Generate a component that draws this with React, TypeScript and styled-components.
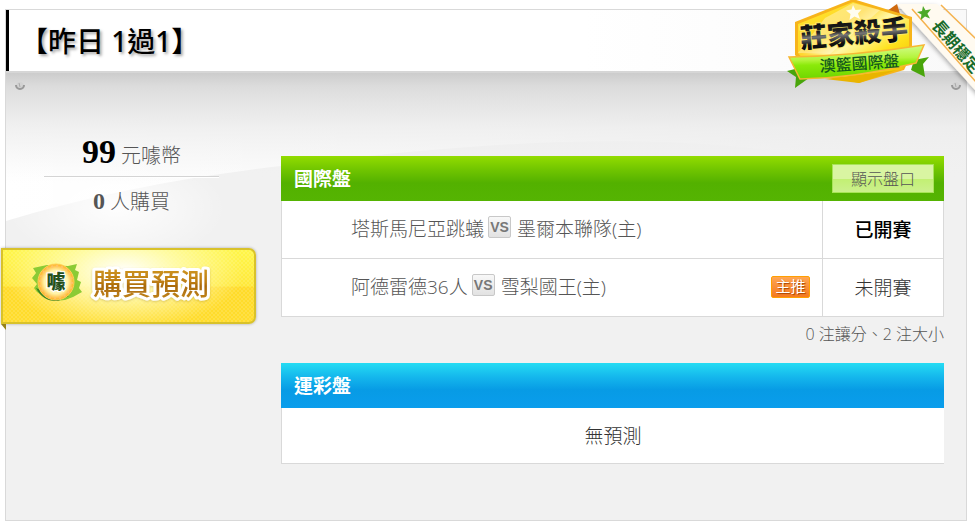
import React from 'react';
import styled, { createGlobalStyle, css } from 'styled-components';

const GlobalStyle = createGlobalStyle`
  * { box-sizing: border-box; }
  body {
    margin: 0;
    background: #fff;
    color: #555;
    font-family: "Open Sans", "Noto Sans CJK TC", sans-serif;
    font-size: 19px;
    font-weight: 300;
    overflow-x: hidden;
  }
`;

const Card = styled.section`
  position: relative;
  margin: 9px 8px 9px 5px;
  border: 1px solid #d9d9d9;
  background: #f1f1f1;
`;

const CardHeader = styled.header`
  display: flex;
  align-items: center;
  height: 61px;
  padding-left: 11px;
  border-left: 3px solid #000;
  background: linear-gradient(to right, #fff 60%, #f9f9f9);
`;

const Title = styled.h1`
  margin: 0;
  color: #000;
  font-family: "Noto Sans", "Noto Sans CJK TC", sans-serif;
  font-size: 28px;
  font-weight: 500;
  line-height: 36px;
  white-space: nowrap;
  text-shadow: 2px 2px 3px rgba(0, 0, 0, 0.35);
`;

const CardBody = styled.div`
  position: relative;
  display: flex;
  align-items: flex-start;
  padding: 0 22px 56px 0;
  border-top: 2px solid #d6d6d6;
`;

const Backdrop = styled.svg`
  position: absolute;
  inset: 0;
  width: 100%;
  height: 220px;
`;

const Screw = styled.svg<{ $side: 'left' | 'right' }>`
  position: absolute;
  top: 7px;
  ${(p) => p.$side}: ${(p) => (p.$side === 'left' ? 8 : 4)}px;
  width: 12px;
  height: 12px;
`;

const Sidebar = styled.aside`
  position: relative;
  flex: 0 0 275px;
  padding-top: 54px;
`;

const Stats = styled.dl`
  width: 175px;
  margin: 0 0 0 38px;
  text-align: center;
`;

const Stat = styled.div<{ $lead?: boolean }>`
  display: flex;
  justify-content: center;
  align-items: baseline;
  gap: 5px;
  height: 50px;
  font-size: 20px;
  line-height: 48px;
  ${(p) =>
    p.$lead &&
    css`
      line-height: 50px;
      border-bottom: 1px solid #d4d4d4;
      box-shadow: 0 1px 0 #fff;
    `}
`;

const StatValue = styled.dd<{ $lead?: boolean }>`
  margin: 0;
  color: ${(p) => (p.$lead ? '#000' : '#555')};
  font-family: "Liberation Serif", serif;
  font-size: ${(p) => (p.$lead ? 34 : 24)}px;
  font-weight: 700;
`;

const StatLabel = styled.dt`
  order: 1;
`;

const BuyButton = styled.button`
  position: relative;
  display: block;
  width: 255px;
  height: 76px;
  margin: 21px 0 0 -5px;
  padding: 0;
  border: 2px solid #d9c22a;
  border-radius: 0 7px 7px 0;
  background:
    radial-gradient(ellipse 48% 80% at 48% 30%, #fff, rgba(255, 253, 190, 0.8) 45%, rgba(255, 250, 150, 0)),
    repeating-conic-gradient(rgba(255, 255, 255, 0.12) 0 25%, transparent 0 50%) 0 0 / 4px 4px,
    linear-gradient(#fff648, #ffe83a 50%, #ffdb28 52%, #ffdc2c);
  box-shadow: 0 0 3px rgba(0, 0, 0, 0.3);
  cursor: pointer;

  &::after {
    content: '';
    position: absolute;
    left: -2px;
    bottom: -8px;
    border-top: 6px solid #94811a;
    border-left: 5px solid transparent;
  }
`;

const BuyArt = styled.svg`
  display: block;
  width: 100%;
  height: 100%;
  font-family: "Noto Sans CJK TC", sans-serif;
`;

const Main = styled.main`
  position: relative;
  flex: 1;
  min-width: 0;
  padding-top: 83px;
`;

const OddsTable = styled.table`
  width: 100%;
  border-collapse: separate;
  border-spacing: 0;
  color: #555;
`;

const themes = {
  green: 'linear-gradient(#93dc00, #6fc400 32%, #53b100 60%, #55b402)',
  blue: 'linear-gradient(#25dcf3, #14b6ec 32%, #079be5 60%, #0a9dec)',
};

const HeadCell = styled.th<{ $theme: keyof typeof themes }>`
  height: 45px;
  padding: 0 10px 0 13px;
  background: ${(p) => themes[p.$theme]};
`;

const HeadBar = styled.div`
  display: flex;
  justify-content: space-between;
  align-items: center;
  color: #fff;
  font-size: 19px;
  font-weight: 700;
  line-height: 28px;
`;

const OddsButton = styled.button`
  width: 102px;
  height: 29px;
  padding: 0;
  border: 1px solid #a8e458;
  background: linear-gradient(#d9f5a2 50%, #c2f073 52%, #ccf08e);
  color: #555;
  font: inherit;
  font-size: 16px;
  font-weight: 300;
  line-height: 24px;
  cursor: pointer;
`;

const cell = css`
  height: 58px;
  border-bottom: 1px solid #d9d9d9;
  background: #fff;
`;

const MatchCell = styled.td`
  ${cell}
  padding: 0 12px 2px 69px;
  border-left: 1px solid #d9d9d9;
`;

const Match = styled.div`
  display: flex;
  align-items: center;
  line-height: 28px;
  white-space: nowrap;
`;

const StatusCell = styled.td<{ $started?: boolean }>`
  ${cell}
  width: 122px;
  padding: 0 0 2px;
  border-left: 1px solid #d9d9d9;
  border-right: 1px solid #d9d9d9;
  color: ${(p) => (p.$started ? '#000' : '#333')};
  font-weight: ${(p) => (p.$started ? 500 : 300)};
  text-align: center;
`;

const EmptyCell = styled.td`
  ${cell}
  height: 56px;
  padding: 0 0 2px;
  border-left: 1px solid #d9d9d9;
  color: #333;
  text-align: center;
`;

const Versus = styled.span`
  width: 23px;
  height: 22px;
  margin: 0 6px 4px 4px;
  border: 1px solid #c8c8c8;
  border-radius: 2px;
  background: linear-gradient(#f8f8f8, #e2e2e2);
  color: #777;
  font: 700 14px/20px "Liberation Sans", sans-serif;
  text-align: center;
`;

const PickTag = styled.span`
  width: 39px;
  height: 22px;
  margin-left: auto;
  border: 1px solid #ffa000;
  border-radius: 2px;
  background: linear-gradient(#ffa653, #f47920);
  color: #fff;
  font-size: 15px;
  font-weight: 400;
  line-height: 19px;
  text-align: center;
  text-shadow: 1px 1px 1px #a64200;
`;

const Summary = styled.p`
  margin: 4px 0 15px;
  font-size: 16px;
  line-height: 27px;
  text-align: right;
`;

const Emblem = styled.svg`
  position: absolute;
  top: -10px;
  right: -9px;
  width: 200px;
  height: 100px;
  font-family: "Noto Sans CJK TC", sans-serif;
`;

type Game = { away: string; home: string; status: string; started?: boolean; pick?: boolean };

const games: Game[] = [
  { away: '塔斯馬尼亞跳蟻', home: '墨爾本聯隊(主)', status: '已開賽', started: true },
  { away: '阿德雷德36人', home: '雪梨國王(主)', status: '未開賽', pick: true },
];

const BodyBackdrop = () => (
  <Backdrop viewBox="0 0 960 220" preserveAspectRatio="none" aria-hidden="true">
    <defs>
      <linearGradient id="swoosh" x1="0" x2="1" y1="0" y2="0">
        <stop offset="0" stopColor="#fff" />
        <stop offset="0.55" stopColor="#fff" stopOpacity="0.6" />
        <stop offset="0.85" stopColor="#fff" stopOpacity="0" />
      </linearGradient>
      <linearGradient id="topShade" x1="0" x2="0" y1="0" y2="1">
        <stop offset="0" stopColor="#ccc" />
        <stop offset="0.12" stopColor="#dadada" stopOpacity="0.95" />
        <stop offset="0.5" stopColor="#ededed" stopOpacity="0.8" />
        <stop offset="1" stopColor="#f1f1f1" stopOpacity="0" />
      </linearGradient>
      <radialGradient id="glow">
        <stop offset="0" stopColor="#fff" stopOpacity="0.9" />
        <stop offset="1" stopColor="#fff" stopOpacity="0" />
      </radialGradient>
    </defs>
    <path d="M0 148C90 121 180 104 275 93C480 68 640 58 800 82L960 110V0H0Z" fill="url(#swoosh)" />
    <ellipse cx="110" cy="135" rx="110" ry="55" fill="url(#glow)" />
    <rect width="960" height="110" fill="url(#topShade)" />
  </Backdrop>
);

const ScrewIcon = ({ side }: { side: 'left' | 'right' }) => (
  <Screw $side={side} viewBox="0 0 12 12" aria-hidden="true">
    <circle cx="6" cy="6" r="4" fill="#d2d2d2" />
    <path d="M2 5a4 4 0 1 0 8 0" fill="none" stroke="#999" strokeWidth="2" />
    <path d="M5 3l1 4" stroke="#aaa" strokeWidth="1" />
  </Screw>
);

const EmblemArt = () => (
  <Emblem viewBox="0 0 200 100" role="img" aria-label="莊家殺手 澳籃國際盤 長期穩定">
    <defs>
      <linearGradient id="gold" x1="0" x2="1" y1="0" y2="1">
        <stop offset="0" stopColor="#ffe928" />
        <stop offset="0.35" stopColor="#ffd62a" />
        <stop offset="0.5" stopColor="#fff7a5" />
        <stop offset="0.7" stopColor="#ffe21c" />
        <stop offset="1" stopColor="#e8b800" />
      </linearGradient>
      <linearGradient id="lime" x1="0" x2="0.1" y1="0" y2="1">
        <stop offset="0" stopColor="#d9ff9c" />
        <stop offset="0.45" stopColor="#b5f43d" />
        <stop offset="0.6" stopColor="#8bea0a" />
        <stop offset="1" stopColor="#70d600" />
      </linearGradient>
      <linearGradient id="steel" x1="0" x2="0" y1="0" y2="1">
        <stop offset="0" stopColor="#000" />
        <stop offset="0.45" stopColor="#222" />
        <stop offset="0.55" stopColor="#777" />
        <stop offset="0.75" stopColor="#111" />
        <stop offset="1" stopColor="#000" />
      </linearGradient>
      <filter id="soft" x="-20%" y="-20%" width="140%" height="140%">
        <feDropShadow dx="-1" dy="2" stdDeviation="2" floodOpacity="0.3" />
      </filter>
    </defs>
    <g filter="url(#soft)">
      <path d="M122 4H162L210 46V101Z" fill="#fffaf0" />
    </g>
    <path d="M137 9L201 82M166 5L201 39" fill="none" stroke="#f5b24d" strokeWidth="1.5" />
    <path d="M112 11L122 4L125 14Z" fill="#cf6a10" />
    <path d="M148 6l2.500 4.300 5.500-1-3.600 4.400 2.600 4.800-5-2-4.300 3.500.700-5.500-4.400-2.500 5-1z" fill="#4da928" />
    <text transform="translate(156 26) rotate(49)" fontSize="16" fontWeight="700" fill="#176b2a">
      長期穩定
    </text>
    <path d="M12 71L28 67L34 78L20 88L21 77Z" fill="#49a50b" />
    <path d="M139 60L154 57L148 64L150 77L136 70Z" fill="#49a50b" />
    <path d="M20 22L78 -1L137 17V53L129 70L84 83L36 73L20 55Z" fill="#f7b41b" />
    <path d="M23 24L78 2L134 19V53L127 69L84 80L38 71L23 53Z" fill="url(#gold)" />
    <path d="M50 79L84 83L122 70Z" fill="#e9b400" />
    <path d="M23 53L50 18L78 3L105 10L55 54Z" fill="#fff" opacity="0.35" />
    <path d="M78 5l2.500 5 6-.500-3.500 4 2 5.500-5.500-2.500-5 3.500 1-6-4.500-3.500 5.500-1z" fill="#fffdf0" />
    <text transform="translate(26 48) rotate(-5)" fontSize="27" fontWeight="900" fill="url(#steel)" stroke="#ffe96a" strokeWidth="2" paintOrder="stroke" strokeLinejoin="round">
      莊家殺手
    </text>
    <path d="M14 57Q80 56 149 45L141 63Q82 78 25 79Z" fill="url(#lime)" stroke="#f7b733" strokeWidth="1.5" />
    <text transform="translate(45 72) rotate(-4)" fontSize="16" fontWeight="500" fill="#145a1c">
      澳籃國際盤
    </text>
  </Emblem>
);

const BuyArtwork = () => (
  <BuyArt viewBox="0 0 251 72" role="img" aria-label="購買預測">
    <defs>
      <linearGradient id="bronze" x1="0" x2="0" y1="0" y2="1">
        <stop offset="0" stopColor="#d8a329" />
        <stop offset="0.5" stopColor="#bd7d13" />
        <stop offset="0.6" stopColor="#a9690d" />
        <stop offset="1" stopColor="#c98e1e" />
      </linearGradient>
      <radialGradient id="coin">
        <stop offset="0" stopColor="#fffef0" />
        <stop offset="0.65" stopColor="#fff3a8" />
        <stop offset="1" stopColor="#ffad1f" />
      </radialGradient>
      <filter id="lift" x="-10%" y="-20%" width="120%" height="150%">
        <feDropShadow dx="0" dy="1" stdDeviation="1" floodColor="#8a6500" floodOpacity="0.3" />
      </filter>
    </defs>
    <path d="M30 18L44 15L65 16L74 14L72 20L76 22L74 30L78 32L76 38L79 42L70 47L62 50L52 51L42 47L34 42L31 38L34 34L29 28L33 23Z" fill="#8bcb35" />
    <path d="M33 38Q40 52 55 51L66 46L52 46Z" fill="#3d8421" />
    <circle cx="53" cy="32" r="18" fill="url(#coin)" stroke="#ffd15a" />
    <circle cx="53" cy="32" r="16" fill="none" stroke="#ffc36a" strokeWidth="2" strokeDasharray="2 3" />
    <text x="53" y="39" fontSize="19" fontWeight="900" textAnchor="middle" fill="#24501a" stroke="#fff" strokeWidth="2" paintOrder="stroke">
      噱
    </text>
    <text x="90" y="45" fontSize="29" fontWeight="500" fill="url(#bronze)" stroke="#fff" strokeWidth="6" paintOrder="stroke" strokeLinejoin="round" filter="url(#lift)">
      購買預測
    </text>
  </BuyArt>
);

export default function App() {
  return (
    <>
      <GlobalStyle />
      <Card>
        <CardHeader>
          <Title>【昨日 1過1】</Title>
        </CardHeader>
        <CardBody>
          <BodyBackdrop />
          <ScrewIcon side="left" />
          <ScrewIcon side="right" />
          <Sidebar>
            <Stats>
              <Stat $lead>
                <StatLabel>元噱幣</StatLabel>
                <StatValue $lead>99</StatValue>
              </Stat>
              <Stat>
                <StatLabel>人購買</StatLabel>
                <StatValue>0</StatValue>
              </Stat>
            </Stats>
            <BuyButton type="button">
              <BuyArtwork />
            </BuyButton>
          </Sidebar>
          <Main>
            <OddsTable>
              <thead>
                <tr>
                  <HeadCell $theme="green" colSpan={2}>
                    <HeadBar>
                      <span>國際盤</span>
                      <OddsButton type="button">顯示盤口</OddsButton>
                    </HeadBar>
                  </HeadCell>
                </tr>
              </thead>
              <tbody>
                {games.map((game) => (
                  <tr key={game.away}>
                    <MatchCell>
                      <Match>
                        <span>{game.away}</span>
                        <Versus>VS</Versus>
                        <span>{game.home}</span>
                        {game.pick && <PickTag>主推</PickTag>}
                      </Match>
                    </MatchCell>
                    <StatusCell $started={game.started}>{game.status}</StatusCell>
                  </tr>
                ))}
              </tbody>
            </OddsTable>
            <Summary>0 注讓分、2 注大小</Summary>
            <OddsTable>
              <thead>
                <tr>
                  <HeadCell $theme="blue">
                    <HeadBar>
                      <span>運彩盤</span>
                    </HeadBar>
                  </HeadCell>
                </tr>
              </thead>
              <tbody>
                <tr>
                  <EmptyCell>無預測</EmptyCell>
                </tr>
              </tbody>
            </OddsTable>
          </Main>
        </CardBody>
        <EmblemArt />
      </Card>
    </>
  );
}
